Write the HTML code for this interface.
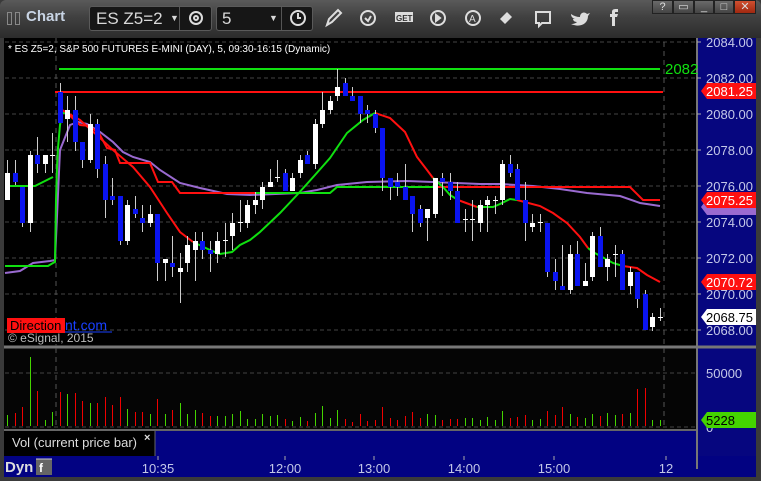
<!DOCTYPE html>
<html><head><meta charset="utf-8"><style>
*{margin:0;padding:0;box-sizing:border-box}
body{width:761px;height:481px;background:#3a3a3a;overflow:hidden;font-family:"Liberation Sans",sans-serif;position:relative}
.tb{position:absolute;left:0;top:0;width:761px;height:38px;background:linear-gradient(#5a5a5a,#404040 45%,#2c2c2c);border-radius:6px 6px 0 0}
.box{position:absolute;top:6px;height:25px;background:#161616;border:1px solid #5a5a5a;border-radius:3px;color:#d8d8d8;font-size:17px;line-height:23px}
.wb{position:absolute;top:0;height:14px;background:linear-gradient(#6a6a6a,#444);border:1px solid #222;color:#ddd;font-size:11px;text-align:center;line-height:12px}
</style></head><body>
<div class="tb"></div>
<div style="position:absolute;left:7px;top:12px;width:5px;height:13px;border:1px solid #888"></div>
<div style="position:absolute;left:15px;top:12px;width:5px;height:13px;border:1px solid #888"></div>
<div style="position:absolute;left:26px;top:8px;color:#c8d4e4;font-weight:bold;font-size:15px">Chart</div>
<div class="box" style="left:89px;width:123px;padding-left:6px">ES Z5=2<span style="position:absolute;left:80px;font-size:9px">▼</span></div>
<div style="position:absolute;left:179px;top:7px;width:1px;height:23px;background:#555"></div>
<div class="box" style="left:216px;width:97px;padding-left:5px">5<span style="position:absolute;left:52px;font-size:9px">▼</span></div>
<div style="position:absolute;left:281px;top:7px;width:1px;height:23px;background:#555"></div>
<svg style="position:absolute;left:0;top:0" width="761" height="38" fill="none" stroke="#ddd" stroke-width="2">
<circle cx="196" cy="18" r="6"/><circle cx="196" cy="18" r="2"/>
<circle cx="298" cy="18" r="7"/><path d="M298 13v5h3"/>
<path d="M327 25l2-6 9-9 3 3-9 9z"/>
<circle cx="368" cy="18" r="7"/><path d="M365 18l3 3 3-5"/>
<rect x="395" y="12" width="18" height="10" fill="#ddd" stroke="none"/><text x="396" y="21" font-size="8" fill="#333" stroke="none" font-family="Liberation Sans" font-weight="bold">GET</text>
<circle cx="438" cy="18" r="7"/><path d="M436 15v6l4-3z" fill="#ddd"/>
<circle cx="473" cy="18" r="7"/><text x="469" y="22" font-size="10" fill="#ddd" stroke="none" font-family="Liberation Sans">A</text>
<path d="M500 19l7-7 5 5-7 7z" fill="#ddd" stroke="none"/>
<path d="M536 12h14v11h-8l-3 3v-3h-3z"/>
<path d="M571 14c3 2 6 3 9 3 0-4 4-6 7-3l3-1-2 3c0 8-8 12-17 8 3 0 5-1 6-2-3 0-4-2-4-3h2c-3-1-4-3-4-5z" fill="#ddd" stroke="none"/>
<path d="M612 26v-9h-2v-3h2v-2c0-2 1-3 4-3h2v3h-2c-1 0-1 0-1 1v1h3l-1 3h-2v9z" fill="#ddd" stroke="none"/>
</svg>
<div class="wb" style="left:652px;width:21px">?</div>
<div class="wb" style="left:673px;width:21px">▭</div>
<div class="wb" style="left:694px;width:20px">_</div>
<div class="wb" style="left:714px;width:20px">□</div>
<div class="wb" style="left:734px;width:22px;background:linear-gradient(#d05030,#a02810)">✕</div>

<svg id="ch" style="position:absolute;left:4px;top:38px" width="753" height="439"></svg>
<script>
var C=[[173,200,160,200,'w'],[173,182,160,185,'b'],[187,223,187,227,'b'],[155,223,151,232,'w'],[155,164,137,173,'b'],[155,164,155,173,'w'],[155,156,133,173,'w'],[92,123,83,123,'b'],[110,119,96,142,'w'],[110,142,96,151,'b'],[142,160,142,168,'b'],[124,160,114,163,'w'],[124,169,119,178,'b'],[164,200,156,218,'b'],[196,200,178,205,'b'],[196,241,196,245,'b'],[205,241,200,245,'w'],[209,214,196,218,'b'],[218,223,205,232,'b'],[214,223,205,227,'w'],[214,263,214,281,'b'],[259,263,259,281,'w'],[263,267,236,277,'b'],[268,272,253,303,'w'],[245,263,236,272,'w'],[241,250,232,281,'w'],[241,250,232,259,'b'],[250,254,241,272,'b'],[241,254,232,263,'w'],[240,241,223,257,'w'],[223,236,213,250,'w'],[222,223,200,232,'w'],[205,223,200,228,'w'],[200,205,192,214,'w'],[187,200,182,209,'w'],[182,187,169,187,'w'],[177,178,160,182,'w'],[173,191,169,191,'b'],[178,191,173,191,'w'],[160,173,155,178,'w'],[155,164,151,164,'b'],[124,164,119,169,'w'],[110,124,92,128,'w'],[101,110,96,114,'w'],[87,96,69,101,'w'],[83,96,78,96,'b'],[96,101,87,101,'b'],[96,114,96,123,'b'],[110,114,105,123,'b'],[114,128,110,133,'b'],[128,178,128,191,'b'],[178,187,178,200,'b'],[182,187,173,196,'b'],[187,200,164,200,'b'],[196,214,196,232,'b'],[209,223,205,227,'b'],[209,218,209,241,'w'],[178,214,178,218,'w'],[178,182,173,196,'b'],[182,191,173,200,'b'],[191,223,182,223,'b'],[219,220,209,232,'w'],[219,220,200,241,'w'],[205,223,200,232,'w'],[200,205,196,232,'w'],[200,201,196,214,'w'],[164,200,160,205,'w'],[164,173,155,177,'b'],[169,200,164,200,'b'],[200,223,182,241,'b'],[223,227,214,232,'w'],[222,223,214,232,'w'],[223,272,223,277,'b'],[272,281,259,290,'b'],[286,290,245,290,'b'],[254,290,245,294,'w'],[254,286,241,286,'b'],[281,286,263,286,'w'],[236,277,232,281,'w'],[236,267,227,267,'b'],[259,267,254,281,'w'],[254,255,245,277,'w'],[254,290,250,290,'b'],[272,286,267,294,'w'],[272,299,272,308,'b'],[294,330,290,330,'b'],[317,327,313,331,'w'],[317,318,308,321,'w']];
var V=[415,413,407,357,391,420,412,392,394,393,401,403,403,397,405,397,409,412,412,414,399,414,410,403,414,410,413,416,416,416,414,411,419,419,414,416,415,419,421,417,421,413,406,418,410,419,422,414,421,420,407,418,420,416,412,418,414,415,420,419,419,418,418,420,417,420,411,418,417,415,420,419,411,415,407,414,417,418,414,416,413,415,414,413,389,388,420,420];
var s='';var ox=4,oy=38;
function L(x1,y1,x2,y2,c,w,d){s+='<line x1="'+(x1-ox)+'" y1="'+(y1-oy)+'" x2="'+(x2-ox)+'" y2="'+(y2-oy)+'" stroke="'+c+'" stroke-width="'+(w||1)+'"'+(d?' stroke-dasharray="'+d+'"':'')+'/>';}
function R(x,y,w,h,c){s+='<rect x="'+(x-ox)+'" y="'+(y-oy)+'" width="'+w+'" height="'+h+'" fill="'+c+'"/>';}
function P(pts,c,w){s+='<polyline fill="none" stroke="'+c+'" stroke-width="'+(w||2)+'" points="'+pts.map(function(p){return (p[0]-ox)+','+(p[1]-oy)}).join(' ')+'"/>';}
function T(x,y,t,c,sz,a,b){s+='<text x="'+(x-ox)+'" y="'+(y-oy)+'" fill="'+c+'" font-size="'+sz+'" font-family="Liberation Sans"'+(a?' text-anchor="'+a+'"':'')+(b?' font-weight="bold"':'')+'>'+t+'</text>';}
R(4,38,694,309,'#000');R(4,348,694,83,'#050505');
R(698,38,58,418,'#06067f');
R(0,430,697,26,'#000');R(155,431,542,25,'#020282');
L(155,431,155,456,'#666');L(4,430,697,430,'#666',2);
R(0,456,756,21,'#020282');
L(4,347,756,347,'#777',3);L(697,38,697,469,'#777',2);
for(var p=0;p<9;p++){var y=42+p*36;L(5,y,697,y,'#444',1,'4,3');}
L(5,373,697,373,'#444',1,'4,3');L(5,427,697,427,'#444',1,'4,3');
L(56,38,56,346,'#555',1,'5,4');L(664,42,664,346,'#555',1,'5,4');
L(56,348,56,430,'#555',1,'5,4');L(664,348,664,430,'#555',1,'5,4');
L(59,69,660,69,'#10e010',2);L(55,92,663,92,'#ff1010',2);
P([[5,273],[20,271],[33,263],[50,261],[55,260],[60,150],[70,125],[78,122],[87,124],[100,132],[113,142],[123,152],[133,157],[150,162],[160,170],[180,183],[200,188],[227,194],[250,195],[300,193],[317,190],[337,185],[367,182],[407,181],[433,182],[480,184],[500,184],[533,186],[560,189],[587,193],[620,196],[640,203],[660,206]],'#9a6ad0',2);
P([[62,110],[67,113],[80,125],[90,126],[100,135],[107,148],[115,150],[120,163],[150,163],[158,182],[172,182],[180,193],[255,193]],'#ff1010',2);
P([[255,193],[330,193],[337,187],[437,187]],'#10e010',2);
P([[437,187],[630,187],[643,200],[660,200]],'#ff1010',2);
P([[5,186],[35,186],[45,181],[53,177]],'#10e010',2);
P([[5,266],[48,266],[53,263],[55,262],[56,200],[57,167],[58,148],[60,125],[62,113],[68,113]],'#10e010',2);
P([[62,110],[80,120],[100,138],[113,150],[133,167],[150,187],[167,213],[180,232],[193,242]],'#ff1010',2);
P([[193,242],[210,250],[220,254],[232,252],[240,245],[250,240],[260,232],[280,213],[297,195],[315,175],[330,158],[347,133],[363,120],[375,113]],'#10e010',2);
P([[375,113],[390,118],[405,132],[417,157],[427,170],[433,178]],'#ff1010',2);
P([[433,178],[443,187],[450,195],[458,200]],'#10e010',2);
P([[458,200],[477,207]],'#ff1010',2);
P([[477,207],[493,207],[500,204],[510,199],[517,200]],'#10e010',2);
P([[517,200],[540,206],[553,213],[567,223],[580,237],[588,248]],'#ff1010',2);
P([[588,248],[593,252],[613,263],[623,266]],'#10e010',2);
P([[623,266],[637,268],[647,275],[660,282]],'#ff1010',2);
for(var i=0;i<C.length;i++){var c=C[i],x=Math.round(7+7.5*i);
L(x+.5,c[2],x+.5,c[3],'#ccc');var h=Math.max(1,c[1]-c[0]);
R(x-2,c[0],5,h,c[4]=='w'?'#fff':'#0a14f0');
L(x+.5,V[i],x+.5,426,c[4]=='w'?'#44d400':'#f00000',1);}
var pr=['2084.00','2082.00','2080.00','2078.00','2076.00','2074.00','2072.00','2070.00','2068.00'];
for(var p=0;p<9;p++){T(706,47+p*36,pr[p],'#c4c8e8',13);L(697,42+p*36,701,42+p*36,'#aaa');}
T(665,74,'2082','#10e010',15);
function tag(y,t,bg,fg){s+='<polygon points="'+(701-ox)+','+(y-oy)+' '+(707-ox)+','+(y-8-oy)+' '+(756-ox)+','+(y-8-oy)+' '+(756-ox)+','+(y+8-oy)+' '+(707-ox)+','+(y+8-oy)+'" fill="'+bg+'"/>';T(706,y+5,t,fg,13);}
tag(207,'','#9a6ad0','#fff');
tag(91,'2081.25','#ff1010','#fff');tag(200,'2075.25','#ff1010','#fff');tag(282,'2070.72','#ff1010','#fff');tag(317,'2068.75','#fff','#000');
T(706,378,'50000','#c4c8e8',13);T(706,432,'0','#c4c8e8',13);
tag(420,'5228','#44d400','#000');
T(8,52,'* ES Z5=2, S&amp;P 500 FUTURES E-MINI (DAY), 5, 09:30-16:15 (Dynamic)','#fff',10);
R(7,318,58,15,'#ff1010');T(10,330,'Direction','#000',13);T(65,330,'nt.com','#1840ff',14);L(65,332,112,332,'#1840ff');
T(8,342,'© eSignal, 2015','#bbb',12);
T(12,447,'Vol (current price bar)','#ddd',13);T(144,441,'×','#ddd',11,0,1);
T(5,472,'Dyn','#ddd',15,0,1);R(36,459,16,16,'#666');L(36,459,52,459,'#ccc');T(39,472,'f','#fff',12,0,1);
var tm=[[158,'10:35'],[285,'12:00'],[374,'13:00'],[464,'14:00'],[554,'15:00'],[666,'12']];
tm.forEach(function(t){T(t[0],473,t[1],'#c4c8e8',13,'middle');L(t[0],456,t[0],460,'#aaa');});
document.getElementById('ch').innerHTML=s;
</script>
</body></html>
